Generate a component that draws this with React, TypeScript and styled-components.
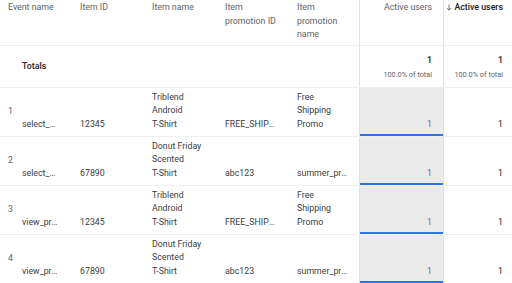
import React from "react";
import styled, { createGlobalStyle, css } from "styled-components";

const Global = createGlobalStyle`
  html, body { margin: 0; padding: 0; background: #ffffff; }
  body { font-family: Roboto, "Noto Sans", Arial, sans-serif; overflow: hidden; }
`;

const Table = styled.div`
  width: 512px;
  display: flex;
  flex-direction: column;
  font-size: 8.8px;
  line-height: 13.5px;
  color: #5f6368;
`;

const Row = styled.div<{ $h: number; $align: "start" | "center" | "end" }>`
  display: grid;
  grid-template-columns: 22px 50px 72px 73px 72px 70px 84px 69px;
  height: ${(p) => p.$h}px;
  border-bottom: 1px solid #efefef;
  align-items: ${(p) => p.$align};
`;

const HeadCell = styled.div<{ $span?: number }>`
  grid-column: span ${(p) => p.$span ?? 1};
  padding: 1px 8px 0 8px;
  min-width: 0;
  color: #5f6368;
`;

const IndexCell = styled.div`
  align-self: center;
  padding-left: 8px;
  color: #5f6368;
`;

const ValueCell = styled.div<{ $pl?: number; $pr?: number; $lines?: boolean }>`
  min-width: 0;
  padding: 0 ${(p) => p.$pr ?? 8}px 5px ${(p) => p.$pl ?? 8}px;
  color: #3c4043;
  white-space: nowrap;
  overflow: hidden;
  text-overflow: ellipsis;
  ${(p) =>
    p.$lines &&
    css`
      display: flex;
      flex-direction: column;
    `}
`;

const Line = styled.span`
  display: block;
`;

const MetricCell = styled.div<{ $shaded?: boolean; $strong?: boolean; $pr: number }>`
  align-self: stretch;
  border-left: 1px solid #e0e0e0;
  display: flex;
  flex-direction: column;
  justify-content: flex-end;
  align-items: flex-end;
  padding-right: ${(p) => p.$pr}px;
  padding-bottom: 5px;
  color: ${(p) => (p.$strong ? "#202124" : "#6b6b6b")};
  ${(p) =>
    p.$shaded &&
    css`
      background: #ebebeb;
      box-shadow: inset 0 -2px 0 #2f74e6;
    `}
`;

const MetricHead = styled.div<{ $bold?: boolean; $pr: number }>`
  align-self: stretch;
  border-left: 1px solid #e0e0e0;
  display: flex;
  justify-content: flex-end;
  align-items: flex-start;
  padding-right: ${(p) => p.$pr}px;
  padding-top: 1px;
  color: ${(p) => (p.$bold ? "#202124" : "#5f6368")};
  font-weight: ${(p) => (p.$bold ? 500 : 400)};
`;

const HeadLabel = styled.span`
  display: inline-flex;
  align-items: center;
  gap: 2px;
`;

const ArrowIcon = styled.svg`
  width: 6px;
  height: 7px;
  flex: none;
`;

const TotalLabel = styled.div`
  align-self: center;
  color: #202124;
  font-weight: 500;
`;

const TotalCell = styled.div<{ $pr: number }>`
  align-self: stretch;
  border-left: 1px solid #e0e0e0;
  display: flex;
  flex-direction: column;
  justify-content: center;
  align-items: flex-end;
  padding-right: ${(p) => p.$pr}px;
  padding-top: 1px;
`;

const TotalValue = styled.div`
  color: #202124;
  font-weight: 500;
`;

const TotalSub = styled.div`
  font-size: 7.3px;
  line-height: 11px;
  margin-top: 2px;
  color: #5f6368;
`;

const Spacer = styled.div<{ $span: number }>`
  grid-column: span ${(p) => p.$span};
`;

const rows = [
  { n: 1, ev: "select_promotion", id: "12345", name: ["Triblend", "Android", "T-Shirt"], pid: "FREE_SHIPPING", pname: ["Free", "Shipping", "Promo"] },
  { n: 2, ev: "select_promotion", id: "67890", name: ["Donut Friday", "Scented", "T-Shirt"], pid: "abc123", pname: ["summer_promotion"] },
  { n: 3, ev: "view_promotion", id: "12345", name: ["Triblend", "Android", "T-Shirt"], pid: "FREE_SHIPPING", pname: ["Free", "Shipping", "Promo"] },
  { n: 4, ev: "view_promotion", id: "67890", name: ["Donut Friday", "Scented", "T-Shirt"], pid: "abc123", pname: ["summer_promotion"] },
];

export default function App() {
  return (
    <>
      <Global />
      <Table>
        <Row $h={45} $align="start">
          <HeadCell $span={2}>Event name</HeadCell>
          <HeadCell>Item ID</HeadCell>
          <HeadCell>Item name</HeadCell>
          <HeadCell>Item promotion ID</HeadCell>
          <HeadCell>Item promotion name</HeadCell>
          <MetricHead $pr={11}>Active users</MetricHead>
          <MetricHead $pr={9} $bold>
            <HeadLabel>
              <ArrowIcon viewBox="0 0 6 7" fill="none" stroke="#5f6368" strokeWidth="0.9">
                <path d="M3 0.5V6.2M0.8 4L3 6.2L5.2 4" />
              </ArrowIcon>
              Active users
            </HeadLabel>
          </MetricHead>
        </Row>
        <Row $h={41} $align="center">
          <Spacer $span={1} />
          <TotalLabel>Totals</TotalLabel>
          <Spacer $span={4} />
          <TotalCell $pr={11}>
            <TotalValue>1</TotalValue>
            <TotalSub>100.0% of total</TotalSub>
          </TotalCell>
          <TotalCell $pr={9}>
            <TotalValue>1</TotalValue>
            <TotalSub>100.0% of total</TotalSub>
          </TotalCell>
        </Row>
        {rows.map((r) => (
          <Row key={r.n} $h={48} $align="end">
            <IndexCell>{r.n}</IndexCell>
            <ValueCell $pl={0} $pr={12}>{r.ev}</ValueCell>
            <ValueCell>{r.id}</ValueCell>
            <ValueCell $lines>
              {r.name.map((l) => (
                <Line key={l}>{l}</Line>
              ))}
            </ValueCell>
            <ValueCell $pr={11}>{r.pid}</ValueCell>
            <ValueCell $lines={r.pname.length > 1}>
              {r.pname.length > 1 ? r.pname.map((l) => <Line key={l}>{l}</Line>) : r.pname[0]}
            </ValueCell>
            <MetricCell $shaded $pr={11}>1</MetricCell>
            <MetricCell $strong $pr={9}>1</MetricCell>
          </Row>
        ))}
      </Table>
    </>
  );
}
